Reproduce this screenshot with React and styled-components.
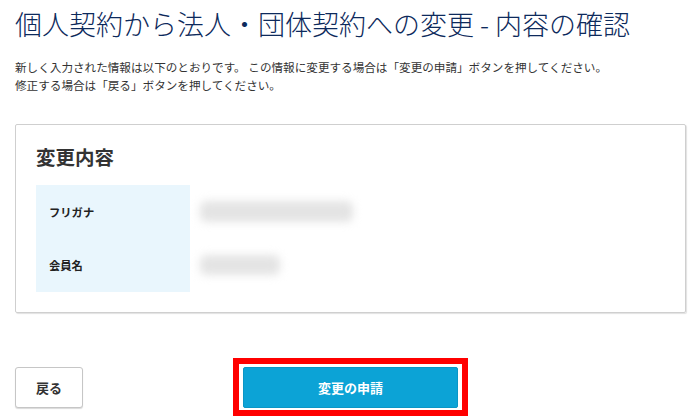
import React from 'react';
import styled, { createGlobalStyle } from 'styled-components';

const GlobalStyle = createGlobalStyle`
  html, body {
    margin: 0;
    padding: 0;
    background: #fff;
  }
  body {
    font-family: 'Noto Sans CJK JP', 'Noto Sans', sans-serif;
    color: #333;
  }
`;

const rows = [
  { label: 'フリガナ', width: 153, height: 21 },
  { label: '会員名', width: 80, height: 20 }
];

export default function App() {
  return (
    <Page>
      <GlobalStyle />
      <Title>個人契約から法人・団体契約への変更 - 内容の確認</Title>
      <Lead>
        新しく入力された情報は以下のとおりです。 この情報に変更する場合は「変更の申請」ボタンを押してください。
        <br />
        修正する場合は「戻る」ボタンを押してください。
      </Lead>
      <Card>
        <CardTitle>変更内容</CardTitle>
        <Table>
          <tbody>
            {rows.map(row => (
              <tr key={row.label}>
                <Label>{row.label}</Label>
                <Value>
                  <Masked style={{ width: row.width, height: row.height }} />
                </Value>
              </tr>
            ))}
          </tbody>
        </Table>
      </Card>
      <Actions>
        <BackButton>戻る</BackButton>
        <Highlight>
          <SubmitButton>変更の申請</SubmitButton>
        </Highlight>
      </Actions>
    </Page>
  );
}

const Page = styled.div`
  width: 700px;
  height: 420px;
  box-sizing: border-box;
  padding: 6px 14px 0 15px;
  overflow: hidden;
`;

const Title = styled.h1`
  margin: 0;
  font-size: 27px;
  line-height: 36px;
  font-weight: 300;
  color: #0d2a5c;
  white-space: nowrap;
`;

const Lead = styled.p`
  margin: 16px 0 0;
  font-size: 11.6px;
  line-height: 18px;
  color: #333;
  white-space: nowrap;
`;

const Card = styled.section`
  margin-top: 30px;
  height: 189px;
  box-sizing: border-box;
  padding: 20px 20px 0 20px;
  border: 1px solid #cfcfcf;
  border-radius: 2px;
  box-shadow: 1px 1px 1px rgba(0, 0, 0, 0.12);
`;

const CardTitle = styled.h2`
  margin: 0;
  font-size: 19.5px;
  line-height: 24px;
  font-weight: 700;
  color: #333;
`;

const Table = styled.table`
  margin-top: 16px;
  width: 100%;
  border-collapse: collapse;
`;

const Label = styled.th`
  width: 154px;
  height: 53.5px;
  box-sizing: border-box;
  padding: 0 0 0 13px;
  background: #e9f6fd;
  text-align: left;
  font-size: 11.3px;
  font-weight: 700;
  color: #222;
`;

const Value = styled.td`
  padding: 0 0 0 10px;
  vertical-align: middle;
`;

const Masked = styled.span`
  display: block;
  background: #e4e4e4;
  border-radius: 6px;
  filter: blur(4px);
`;

const Actions = styled.div`
  margin-top: 45px;
  display: grid;
  grid-template-columns: 1fr auto 1fr;
  align-items: center;
`;

const BaseButton = styled.button`
  display: block;
  height: 41px;
  box-sizing: border-box;
  font-family: inherit;
  font-size: 13px;
  font-weight: 700;
  cursor: pointer;
`;

const BackButton = styled(BaseButton)`
  justify-self: start;
  width: 68px;
  background: #fff;
  color: #333;
  border: 1px solid #c6c6c6;
  border-radius: 3px;
  box-shadow: 0 1px 1px rgba(0, 0, 0, 0.15);
`;

const Highlight = styled.div`
  padding: 3px 4px 2px;
  border: 6px solid #ff0000;
`;

const SubmitButton = styled(BaseButton)`
  width: 215px;
  background: #0ca3d6;
  color: #fff;
  border: 1px solid #0a96c6;
  border-radius: 2px;
`;
